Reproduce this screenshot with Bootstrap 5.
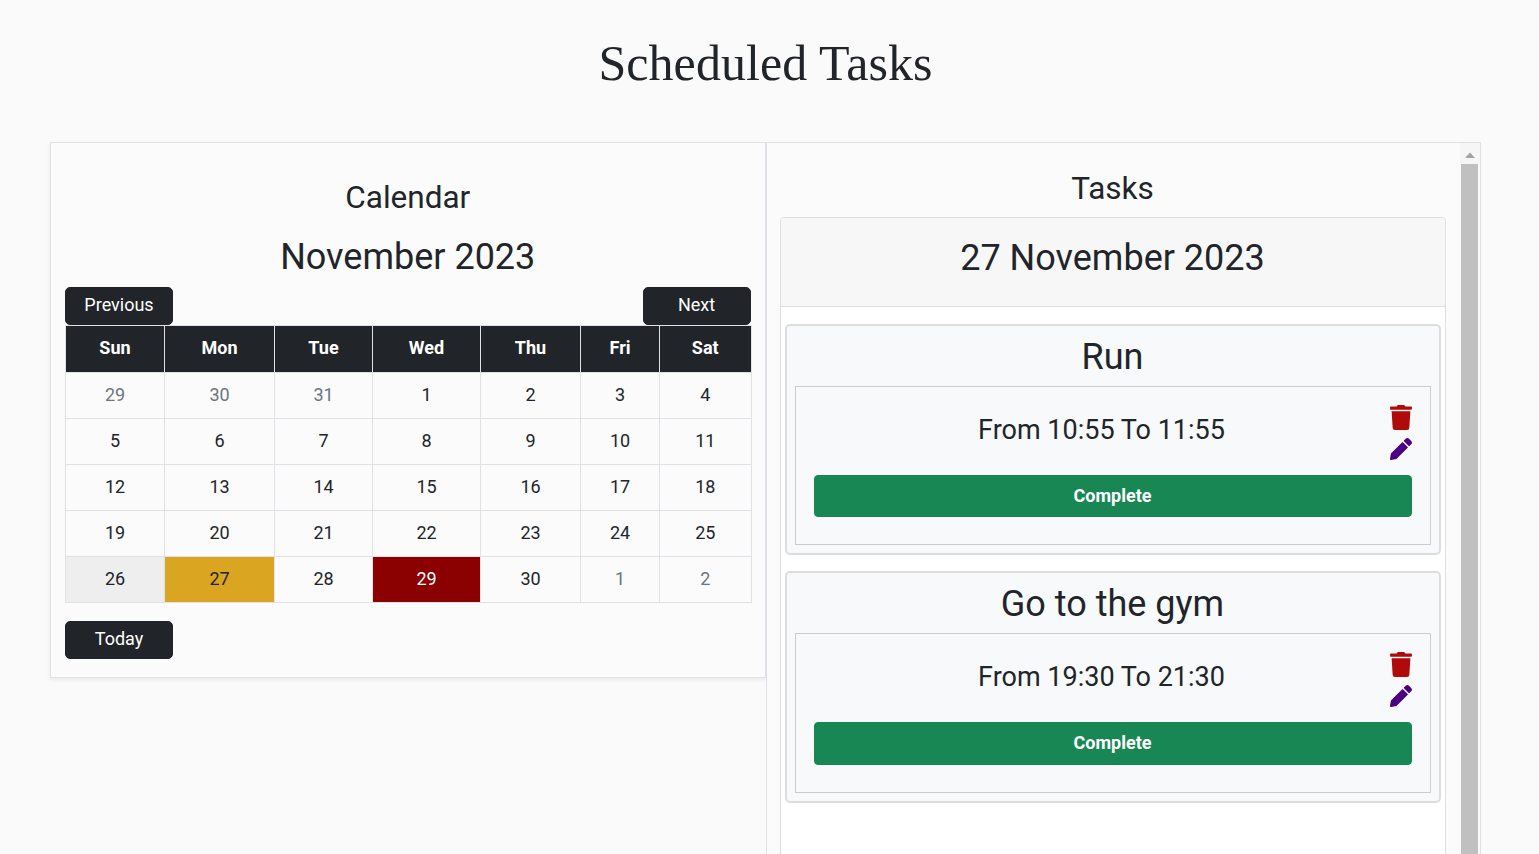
<!DOCTYPE html>
<html lang="en">
<head>
<meta charset="utf-8">
<title>Scheduled Tasks</title>
<link href="https://cdn.jsdelivr.net/npm/bootstrap@5.3.0/dist/css/bootstrap.min.css" rel="stylesheet">
<style>
html,body{height:854px;overflow:hidden}
body{background:#fafafa;font-family:Roboto,"Liberation Sans",sans-serif;font-size:18px;color:#212529}
.page-title{font-family:"Liberation Serif",serif;font-size:50px;font-weight:400;line-height:60px;text-align:center;margin:0;padding:33px 8px 0 0;height:142px;letter-spacing:.08px}
.panels{width:1431px;margin-left:50px}
.cal-panel{background:#fbfbfb;border:1px solid #dee2e6;box-shadow:0 2px 4px rgba(0,0,0,.07);padding:14px;height:536px}
.cal-heading{font-size:31.5px;font-weight:400;line-height:38px;text-align:center;margin:22px 0 0}
.month-heading{font-size:36px;font-weight:400;line-height:43px;text-align:center;margin:19px 0 8px}
.cal-btn{width:108px;height:38px;padding:0 0 2px;font-size:18px;background:#212529;border-radius:5px;line-height:34px}
.cal-table{font-size:18px;margin:0 0 18px;color:#212529;border-color:#dee2e6;width:685.5px;table-layout:fixed;--bs-table-bg:transparent}
.cal-table th,.cal-table td{text-align:center;padding:8px 0 10px;line-height:27px;height:46px}
.cal-table thead th{background:#212529;color:#fff;border-color:#dee2e6;font-weight:700;border-bottom-color:#212529;height:47px;padding-bottom:11px}
.w1{width:99px}.w2{width:110px}.w3{width:98px}.w4{width:108px}.w5{width:100px}.w6{width:79px}.w7{width:91.5px}
.cal-table td.muted-day{color:#6c757d}
.cal-table td.day-prev{background:#eee}
.cal-table td.day-sel{background:#daa520;color:#212529}
.cal-table td.day-now{background:#8b0000;color:#fff}
.task-panel{background:#fbfbfb;border:1px solid #dee2e6;height:760px;overflow:hidden;padding-left:13px}
.task-main{width:666px;margin-right:14px;flex:none}
.fake-scroll{width:20px;flex:none;background:#fafafa}
.fake-arrow{height:21px;background:#f6f6f6;display:block}
.fake-arrow svg{display:block}
.fake-thumb{flex:1;background:#c0c0c0;margin:0 2px 0 1px}
.task-heading{font-size:31.5px;font-weight:400;line-height:38px;text-align:center;margin:27px 0 9px}
.day-card{border-color:#dfdfdf;border-radius:4px;height:800px;background:#fff}
.day-card .card-header{height:89px;background:#f7f7f7;border-color:#dfdfdf;padding:0;text-align:center;font-size:36px;line-height:81px}
.day-card .card-body{padding:17px 4px}
.task-item{background:#f8f9fa;border:2px solid #ddd;border-radius:5px;padding:0 8px 8px;margin-bottom:16px}
.task-name{font-size:36px;font-weight:400;line-height:43px;text-align:center;margin:0;padding:10px 0 7px}
.task-box{border:1px solid #ccc;padding:18px 18px 27px}
.time-text{font-size:27px;line-height:32px;text-align:center;flex:1;padding-top:9px}
.task-top{height:70px}
.icon-stack{width:22px}
.icon-stack svg{display:block;width:22px}
.ico-trash{height:25px;fill:#b00a0a;margin-bottom:8px}
.ico-pen{height:22px;fill:#4b0082}
.done-btn{font-size:18px;font-weight:700;padding:0;height:42px;line-height:40px;background:#198754;border-color:#198754;border-radius:4px}
.task-item + .task-item .done-btn{height:43px;padding-bottom:1px}
</style>
</head>
<body>
<h1 class="page-title">Scheduled Tasks</h1>
<div class="panels row g-0">
  <div class="col-6">
    <div class="cal-panel">
      <h3 class="cal-heading">Calendar</h3>
      <h2 class="month-heading">November 2023</h2>
      <div class="d-flex justify-content-between">
        <button class="btn btn-dark cal-btn">Previous</button>
        <button class="btn btn-dark cal-btn">Next</button>
      </div>
      <table class="table table-bordered cal-table">
        <thead>
          <tr><th class="w1">Sun</th><th class="w2">Mon</th><th class="w3">Tue</th><th class="w4">Wed</th><th class="w5">Thu</th><th class="w6">Fri</th><th class="w7">Sat</th></tr>
        </thead>
        <tbody>
          <tr><td class="muted-day">29</td><td class="muted-day">30</td><td class="muted-day">31</td><td>1</td><td>2</td><td>3</td><td>4</td></tr>
          <tr><td>5</td><td>6</td><td>7</td><td>8</td><td>9</td><td>10</td><td>11</td></tr>
          <tr><td>12</td><td>13</td><td>14</td><td>15</td><td>16</td><td>17</td><td>18</td></tr>
          <tr><td>19</td><td>20</td><td>21</td><td>22</td><td>23</td><td>24</td><td>25</td></tr>
          <tr><td class="day-prev">26</td><td class="day-sel">27</td><td>28</td><td class="day-now">29</td><td>30</td><td class="muted-day">1</td><td class="muted-day">2</td></tr>
        </tbody>
      </table>
      <button class="btn btn-dark cal-btn">Today</button>
    </div>
  </div>
  <div class="col-6">
    <div class="task-panel d-flex">
      <div class="task-main">
        <h3 class="task-heading">Tasks</h3>
        <div class="card day-card">
          <div class="card-header">27 November 2023</div>
          <div class="card-body">
            <div class="task-item">
              <h2 class="task-name">Run</h2>
              <div class="task-box">
                <div class="d-flex task-top">
                  <div class="time-text">From 10:55 To 11:55</div>
                  <div class="icon-stack">
                    <svg class="ico-trash" viewBox="0 0 448 512"><path d="M432 32H312l-9.400-18.700A24 24 0 0 0 281.100 0H166.800a23.720 23.720 0 0 0-21.400 13.300L136 32H16A16 16 0 0 0 0 48v32a16 16 0 0 0 16 16h416a16 16 0 0 0 16-16V48a16 16 0 0 0-16-16zM53.200 467a48 48 0 0 0 47.900 45h245.800a48 48 0 0 0 47.900-45L416 128H32z"/></svg>
                    <svg class="ico-pen" viewBox="0 0 512 512"><path d="M497.900 142.100l-46.100 46.100c-4.700 4.700-12.300 4.700-17 0l-111-111c-4.700-4.700-4.700-12.300 0-17l46.100-46.100c18.700-18.700 49.100-18.700 67.900 0l60.100 60.100c18.800 18.700 18.800 49.100 0 67.900zM284.200 99.800L21.600 362.400.4 483.900c-2.900 16.400 11.400 30.600 27.800 27.800l121.500-21.300 262.600-262.600c4.700-4.700 4.700-12.300 0-17l-111-111c-4.800-4.700-12.400-4.700-17.100 0z"/></svg>
                  </div>
                </div>
                <button class="btn btn-success w-100 done-btn">Complete</button>
              </div>
            </div>
            <div class="task-item">
              <h2 class="task-name">Go to the gym</h2>
              <div class="task-box">
                <div class="d-flex task-top">
                  <div class="time-text">From 19:30 To 21:30</div>
                  <div class="icon-stack">
                    <svg class="ico-trash" viewBox="0 0 448 512"><path d="M432 32H312l-9.400-18.700A24 24 0 0 0 281.100 0H166.800a23.720 23.720 0 0 0-21.400 13.300L136 32H16A16 16 0 0 0 0 48v32a16 16 0 0 0 16 16h416a16 16 0 0 0 16-16V48a16 16 0 0 0-16-16zM53.200 467a48 48 0 0 0 47.900 45h245.800a48 48 0 0 0 47.900-45L416 128H32z"/></svg>
                    <svg class="ico-pen" viewBox="0 0 512 512"><path d="M497.900 142.100l-46.100 46.100c-4.700 4.700-12.300 4.700-17 0l-111-111c-4.700-4.700-4.700-12.300 0-17l46.100-46.100c18.700-18.700 49.100-18.700 67.900 0l60.100 60.100c18.800 18.700 18.800 49.100 0 67.900zM284.200 99.800L21.600 362.400.4 483.900c-2.900 16.400 11.400 30.600 27.800 27.800l121.500-21.300 262.600-262.600c4.700-4.700 4.700-12.300 0-17l-111-111c-4.800-4.700-12.400-4.700-17.100 0z"/></svg>
                  </div>
                </div>
                <button class="btn btn-success w-100 done-btn">Complete</button>
              </div>
            </div>
          </div>
        </div>
      </div>
      <div class="fake-scroll d-flex flex-column" aria-hidden="true">
        <div class="fake-arrow"><svg width="20" height="21" viewBox="0 0 20 21"><path d="M5 15h10L10 9.500z" fill="#a3a3a3"/></svg></div>
        <div class="fake-thumb"></div>
      </div>
    </div>
  </div>
</div>
<script src="https://cdn.jsdelivr.net/npm/bootstrap@5.3.0/dist/js/bootstrap.bundle.min.js"></script>
</body>
</html>
